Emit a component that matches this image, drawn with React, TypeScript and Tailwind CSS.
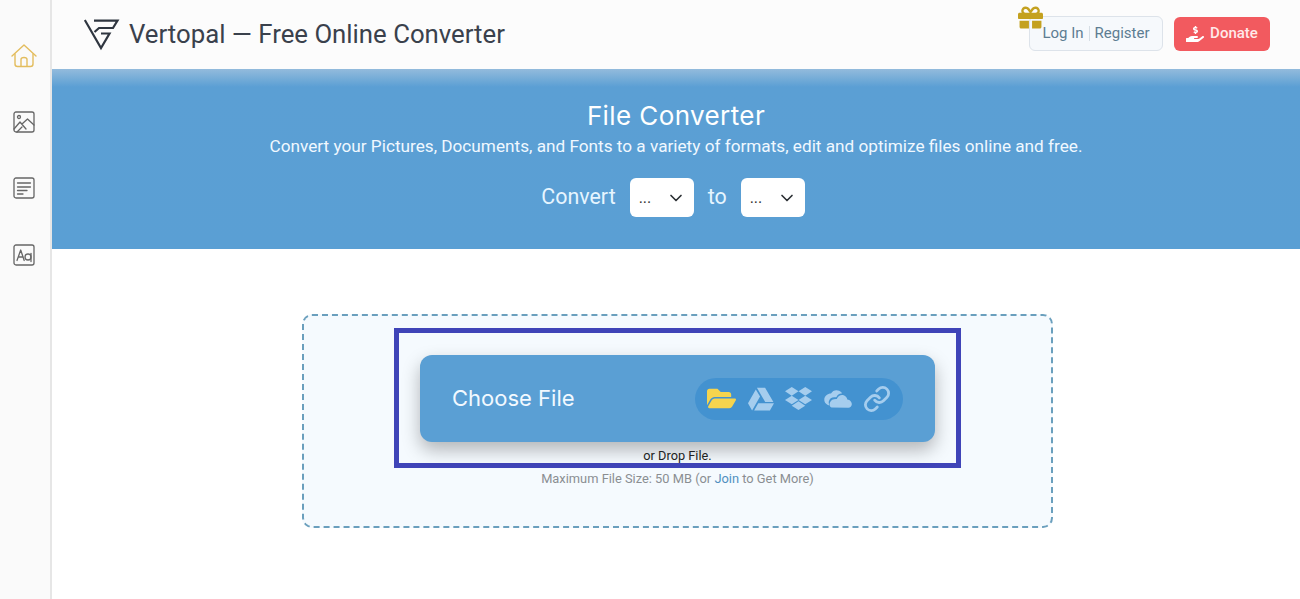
import type { ReactNode } from "react";
import { ChevronDown, Link } from "lucide-react";
import { FaFolderOpen, FaGoogleDrive, FaDropbox, FaGift, FaHandHoldingUsd } from "react-icons/fa";

function Logo() {
  return (
    <svg width="36" height="32" viewBox="0 0 36 32" fill="none" className="shrink-0">
      <path d="M0.8 1 L17 29 L25.5 14.5 H17" stroke="#2f3640" strokeWidth="2.2" />
      <path d="M10 1.6 H33.5 L29 9 H15 L10.5 13" stroke="#2f3640" strokeWidth="2.2" />
    </svg>
  );
}

function SideIcon({ children }: { children: ReactNode }) {
  return (
    <svg width="24" height="24" viewBox="0 0 24 24" fill="none" stroke="#666" strokeWidth="1.3" strokeLinecap="round" strokeLinejoin="round">
      {children}
    </svg>
  );
}

function OneDrive() {
  return (
    <svg width="28" height="20" viewBox="0 0 28 20" fill="currentColor">
      <path d="M7 4.5 C9 0.5 14.5 0 17.5 3.5 C18 4 18 4.5 17.5 4.6 C15 4.8 13.5 6 12.5 8 C12 8.4 11.5 8.4 11 8.3 C8 8 5.5 9.5 4.8 12.5 C4.6 13.5 4.8 14.5 5 15.5 C5.2 16.2 4.8 16.5 4.2 16.2 C1.5 15 0 12.8 0.3 10 C0.6 7 3.5 4.5 7 4.5 Z" />
      <path d="M7.5 18.5 C5.5 18 5 15.5 6 13.5 C7 10.8 9.5 9.8 12.8 10 C14 7 16.5 5.5 19 6 C21.5 6.5 23 8.5 23.3 10.5 C26 10.8 28 13 27.8 15.5 C27.6 17.5 26.2 18.7 24.5 18.7 Z" />
    </svg>
  );
}

function Select() {
  return (
    <div className="flex h-[39px] w-[64px] items-center justify-between rounded-md bg-white pl-[9px] pr-[8px] text-[#333]">
      <span className="text-base leading-none">...</span>
      <ChevronDown size={20} strokeWidth={2} className="text-[#2b2f33]" />
    </div>
  );
}

export default function App() {
  return (
    <div className="flex h-[599px] w-[1300px] overflow-hidden bg-white font-['Roboto',sans-serif]">
      <aside className="flex w-[52px] shrink-0 flex-col items-center gap-[42px] border-r-2 border-[#e6e6e6] bg-[#fafafa] pr-[2px] pt-[44px]">
        <svg width="26" height="24" viewBox="0 0 26 24" fill="none" stroke="#e3bd5e" strokeWidth="1.4" strokeLinejoin="round" strokeLinecap="round">
          <path d="M1 12 L13 1 L25 12" />
          <path d="M4 10 V20 Q4 22.5 6.5 22.5 H19.5 Q22 22.5 22 20 V10" />
          <path d="M10 22 V15.5 Q10 13.5 13 13.5 Q16 13.5 16 15.5 V22" />
        </svg>
        <SideIcon>
          <rect x="2" y="2" width="20" height="20" rx="2" />
          <circle cx="7" cy="7" r="1.5" />
          <path d="M2 19 L8 12 L14 19 M10 14 L15.5 9 L22 15" />
          <path d="M5 22 L10 17" />
        </SideIcon>
        <SideIcon>
          <rect x="2" y="2" width="20" height="20" rx="2" />
          <path d="M5.5 7 H18.5 M5.5 11 H18.5 M5.5 14.5 H15 M5.5 18 H11" />
        </SideIcon>
        <div className="mt-px">
          <SideIcon>
            <rect x="2" y="2" width="20" height="20" rx="2" />
            <path d="M5 17.5 L8.7 7 L12.2 17.5 M6.2 14 H11.2" />
            <circle cx="16" cy="14" r="3" />
            <path d="M19 10.5 V18.5" />
          </SideIcon>
        </div>
      </aside>

      <main className="flex min-w-0 flex-1 flex-col">
        <header className="flex h-[69px] shrink-0 items-center bg-[#fcfcfc] pl-[32px] pr-[30px]">
          <Logo />
          <h1 className="ml-[9px] whitespace-nowrap text-[25.75px] font-normal text-[#3a414c]">Vertopal — Free Online Converter</h1>
          <div className="relative ml-auto mt-[-2px] flex items-center gap-[11px]">
            <FaGift size={25} className="absolute left-[-11px] top-[-11px] text-[#c4a11f]" />
            <div className="flex h-[35px] w-[134px] items-center justify-center rounded-md border border-[#dde3ea] bg-[#f6f9fc] text-[15px] text-[#5d7d92]">
              <span>Log In</span>
              <span className="mx-[5px] h-[15px] w-px bg-[#d6dee5]" />
              <span>Register</span>
            </div>
            <div className="flex h-[34px] w-[96px] items-center justify-center gap-[6px] rounded-md bg-[#f25a5f] text-[15px] font-medium text-[#ffe9e9]">
              <FaHandHoldingUsd size={18} className="text-white" />
              <span>Donate</span>
            </div>
          </div>
        </header>

        <section className="flex h-[180px] shrink-0 flex-col items-center bg-[linear-gradient(to_bottom,#93bbdc_0px,#5b9fd4_18px,#5a9fd4_100%)] pt-[29px] text-white">
          <h2 className="font-['Inter',sans-serif] text-[26px] font-normal leading-[36px] tracking-[0.4px]">File Converter</h2>
          <p className="text-[17.2px] leading-[24px] text-[#f0f8ff]">Convert your Pictures, Documents, and Fonts to a variety of formats, edit and optimize files online and free.</p>
          <div className="mr-[6px] mt-[20px] flex items-center text-[21.4px] text-[#e6f5ff]">
            <span>Convert</span>
            <div className="ml-[14px]"><Select /></div>
            <span className="mx-[14px]">to</span>
            <Select />
          </div>
        </section>

        <div className="ml-[250px] mt-[65px] flex h-[214px] w-[751px] flex-col items-center rounded-[10px] border-2 border-dashed border-[#6a9fbd] bg-[#f5fafe] pt-[12px]">
          <div className="flex h-[140px] w-[567px] shrink-0 flex-col border-[5px] border-[#3f44b8] px-[21px] pt-[22px]">
            <div className="flex h-[87px] shrink-0 items-center justify-between rounded-xl bg-[#5a9fd4] pl-[32px] pr-[32px] shadow-[0_8px_18px_rgba(0,0,0,0.28)]">
              <span className="font-['Inter',sans-serif] text-[22px] font-normal text-[#f2f9ff]">Choose File</span>
              <div className="flex h-[42px] w-[208px] items-center justify-between rounded-full bg-[#4392d0] px-[12px] text-[#a5cdee]">
                <FaFolderOpen size={29} className="text-[#f5d44e]" />
                <FaGoogleDrive size={26} />
                <FaDropbox size={27} />
                <OneDrive />
                <Link size={28} strokeWidth={2.4} />
              </div>
            </div>
            <p className="mt-[6px] text-center text-[12.75px] leading-[15px] text-[#222]">or Drop File.</p>
          </div>
          <p className="mt-[3px] text-[12.85px] leading-[15px] text-[#8a8e92]">
            Maximum File Size: 50 MB (or <span className="text-[#4f8fc0]">Join</span> to Get More)
          </p>
        </div>
      </main>
    </div>
  );
}
